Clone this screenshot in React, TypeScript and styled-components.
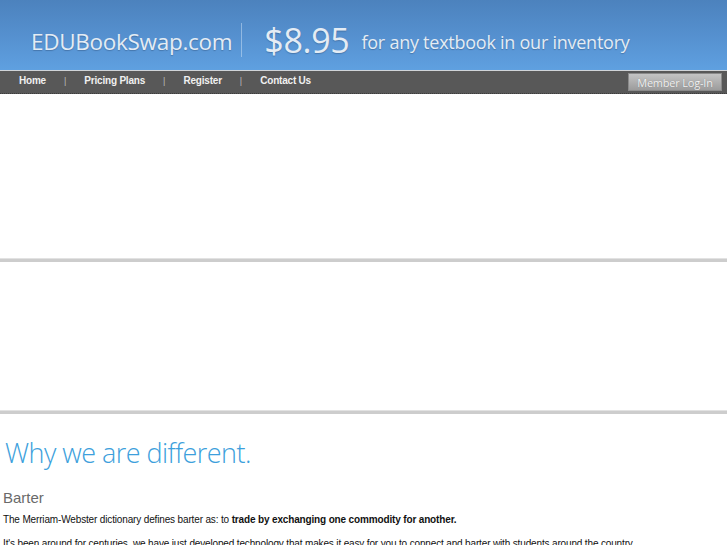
import React from "react";
import styled, { createGlobalStyle } from "styled-components";

const Global = createGlobalStyle`
  html, body { margin: 0; padding: 0; background: #fff; }
  body { font-family: "Liberation Sans", Arial, sans-serif; }
`;

const Header = styled.header`
  height: 70px;
  background: linear-gradient(to bottom, #4c82bd 0%, #5590cf 50%, #5fa0e0 100%);
  display: flex;
  align-items: center;
  padding-left: 31px;
  box-sizing: border-box;
  font-family: "Open Sans", "Noto Sans", sans-serif;
  color: #e4ecf4;
  text-shadow: 0 1px 1px rgba(40, 70, 110, 0.4);
`;

const Brand = styled.span`
  font-size: 22.5px;
  letter-spacing: -0.3px;
  margin-top: 12px;
`;

const Sep = styled.span`
  width: 1px;
  height: 34px;
  background: rgba(220, 235, 250, 0.45);
  margin: 10px 22px 0 9px;
`;

const Price = styled.span`
  font-size: 34px;
  margin-top: 9px;
  letter-spacing: -0.3px;
`;

const Tag = styled.span`
  font-size: 18px;
  margin-left: 12px;
  margin-top: 14px;
  letter-spacing: -0.25px;
`;

const Nav = styled.nav`
  height: 24px;
  background: #585858;
  border-top: 1px solid #d0d4d8;
  border-bottom: 1px dotted #3c3c3c;
  display: flex;
  align-items: center;
  padding-left: 19px;
  padding-right: 5px;
  box-sizing: border-box;
`;

const NavItem = styled.a`
  color: #f0f0f0;
  font-size: 10px;
  font-weight: bold;
  text-decoration: none;
  margin-top: -3px;
  letter-spacing: -0.2px;
`;

const NavSep = styled.span`
  color: #b8b8b8;
  font-size: 9px;
  margin: -3px 18px 0 18px;
`;

const Spacer = styled.div`
  flex: 1;
`;

const LoginBtn = styled.button`
  width: 94px;
  height: 18px;
  border: 1px solid #8a8a8a;
  background: linear-gradient(to bottom, #c4c4c4, #9c9c9c);
  color: #f2f2f2;
  font-family: "Open Sans", "Noto Sans", sans-serif;
  font-size: 11px;
  padding: 0;
  letter-spacing: -0.2px;
  text-shadow: 0 0 1px rgba(0,0,0,0.3);
`;

const Banner = styled.div<{ h: number }>`
  height: ${(p) => p.h}px;
`;

const Divider = styled.div`
  height: 3px;
  background: #cdcdcd;
  border-top: 1px solid #e2e2e2;
`;

const Content = styled.main`
  padding: 0 3px;
`;

const Heading = styled.h1`
  font-family: "Open Sans", "Noto Sans", sans-serif;
  font-weight: 300;
  font-size: 27px;
  color: #3d9fdc;
  margin: 21px 0 0 2px;
  letter-spacing: -0.55px;
  line-height: 36px;
`;

const SubHead = styled.h2`
  font-size: 15px;
  font-weight: normal;
  color: #6a6a6a;
  margin: 18px 0 0 0;
  line-height: 18px;
`;

const P = styled.p`
  font-size: 10px;
  color: #111;
  margin: 6px 0 0 0;
  line-height: 14px;
  letter-spacing: -0.15px;
`;

const P2 = styled(P)`
  margin-top: 10px;
`;

export default function App() {
  return (
    <>
      <Global />
      <Header>
        <Brand>EDUBookSwap.com</Brand>
        <Sep />
        <Price>$8.95</Price>
        <Tag>for any textbook in our inventory</Tag>
      </Header>
      <Nav>
        <NavItem href="#">Home</NavItem>
        <NavSep>|</NavSep>
        <NavItem href="#">Pricing Plans</NavItem>
        <NavSep>|</NavSep>
        <NavItem href="#">Register</NavItem>
        <NavSep>|</NavSep>
        <NavItem href="#">Contact Us</NavItem>
        <Spacer />
        <LoginBtn>Member Log-In</LoginBtn>
      </Nav>
      <Banner h={164} />
      <Divider />
      <Banner h={148} />
      <Divider />
      <Content>
        <Heading>Why we are different.</Heading>
        <SubHead>Barter</SubHead>
        <P>
          The Merriam-Webster dictionary defines barter as: to{" "}
          <b>trade by exchanging one commodity for another.</b>
        </P>
        <P2>
          It's been around for centuries, we have just developed technology that makes it easy for you to connect and barter with students around the country.
        </P2>
      </Content>
    </>
  );
}
